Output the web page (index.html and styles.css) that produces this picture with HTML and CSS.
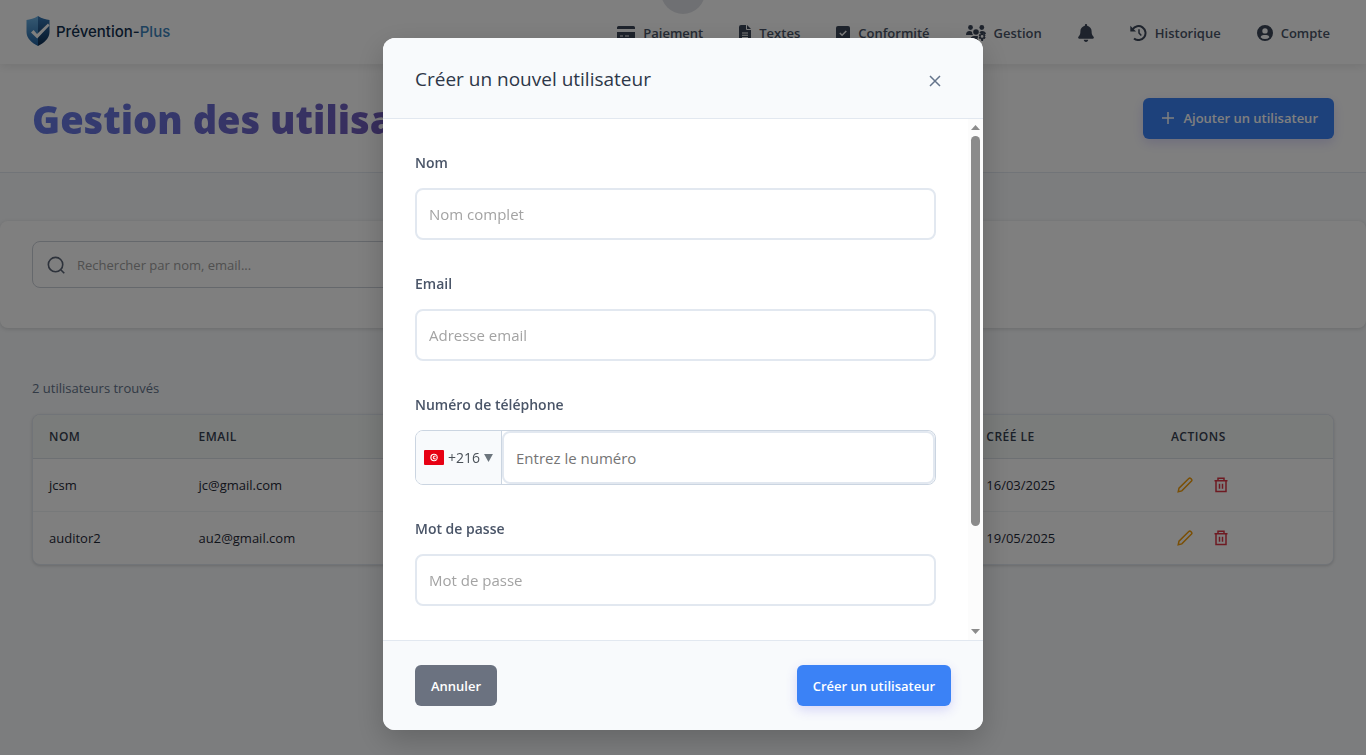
FILE: index.html
```html
<!DOCTYPE html>
<html lang="fr">
<head>
<meta charset="utf-8">
<meta name="viewport" content="width=device-width, initial-scale=1">
<title>Prévention-Plus</title>
<link rel="stylesheet" href="styles.css">
</head>
<body>
<div class="page">
  <header class="topbar">
    <a class="brand" href="#">
      <svg class="brand-mark" viewBox="0 0 24 30" aria-hidden="true">
        <defs>
          <linearGradient id="shieldLeft" x1="0" y1="0" x2="0" y2="1"><stop offset="0" stop-color="#6db4e6"/><stop offset="1" stop-color="#1f5f9e"/></linearGradient>
          <linearGradient id="shieldRight" x1="0" y1="0" x2="0" y2="1"><stop offset="0" stop-color="#3679b8"/><stop offset="1" stop-color="#0d2c50"/></linearGradient>
        </defs>
        <path fill="url(#shieldLeft)" d="M12 0C8 2.600 4 3.600.500 4v12C.500 22.500 6 27 12 30z"/>
        <path fill="url(#shieldRight)" d="M12 0c4 2.600 8 3.600 11.500 4v12C23.500 22.500 18 27 12 30z"/>
        <path fill="#fff" d="M5 16.500 7.600 14l3.400 4L22 7.500l1.500 2L11.200 22.500z"/>
      </svg>
      <span class="brand-name">Prévention-<span class="brand-accent">Plus</span></span>
    </a>
    <span class="top-knob"></span>
    <nav class="nav">
      <a class="nav-link" href="#"><svg class="w18" viewBox="0 0 18 16" aria-hidden="true"><path d="M1.500 1h15A1.500 1.500 0 0 1 18 2.500V4H0V2.500A1.500 1.500 0 0 1 1.500 1zM0 7h18v6.500a1.500 1.500 0 0 1-1.500 1.500h-15A1.500 1.500 0 0 1 0 13.500zm3 3.500v1h3v-1zm5 0v1h4v-1z" fill-rule="evenodd"/></svg>Paiement</a>
      <a class="nav-link" href="#"><svg class="w12" viewBox="0 0 12 16" aria-hidden="true"><path fill-rule="evenodd" d="M2 0h5v4a1 1 0 0 0 1 1h4v9a2 2 0 0 1-2 2H2a2 2 0 0 1-2-2V2a2 2 0 0 1 2-2zm6 0 4 4H8zM3 7.500v1h6v-1zm0 2.200v1h6v-1zM3 12v1h6v-1z"/></svg>Textes</a>
      <a class="nav-link" href="#"><svg class="w14" viewBox="0 0 14 16" aria-hidden="true"><path d="M2 1h10a2 2 0 0 1 2 2v10a2 2 0 0 1-2 2H2a2 2 0 0 1-2-2V3a2 2 0 0 1 2-2z"/><path class="tick" d="m3.800 8 2.300 2.300L10.300 6"/></svg>Conformité</a>
      <a class="nav-link" href="#"><svg class="w20" viewBox="0 0 20 16" aria-hidden="true"><circle cx="4.500" cy="2.500" r="2.400"/><circle cx="15.800" cy="2.500" r="2.400"/><circle cx="10" cy="7" r="2.800"/><path d="M0 10c0-2.700 1.300-4 3.500-4 1 0 2 .300 2.600.900C6 8.300 6.500 9.200 7.200 10zM13.500 8c.100-1 .600-2 2.500-2 2.300 0 3.800 1 4 3l-2 .300-1.500-1-1.300.600zM4 16c0-3.300 1.500-5 4.500-5h3.200l.300 1-.600 1.500L12.500 16z"/><path fill-rule="evenodd" d="m15.300 8 1.700 0 .400 1.300 1.300-.400.900 1.500-.900 1 .900 1.200-.900 1.500-1.300-.400L17 16h-1.700l-.400-2.300-1.300.400-.900-1.500.900-1.200-.9-1 .9-1.500 1.300.400zM16.100 10a1.400 1.400 0 1 0 0 2.800 1.400 1.400 0 0 0 0-2.800z"/></svg>Gestion</a>
      <a class="nav-link" href="#" aria-label="Notifications"><svg class="bell" viewBox="0 0 448 512" aria-hidden="true"><path d="M224 0c-17.700 0-32 14.300-32 32V51.200C119 66 64 130.600 64 208v18.800c0 47-17.300 92.400-48.500 127.600l-7.400 8.300c-8.400 9.400-10.400 22.900-5.300 34.400S19.400 416 32 416H416c12.600 0 24-7.400 29.200-18.900s3.100-25-5.300-34.400l-7.400-8.300C401.300 319.200 384 273.900 384 226.800V208c0-77.400-55-142-128-156.800V32c0-17.700-14.300-32-32-32zm45.300 493.300c12-12 18.700-28.300 18.700-45.300H160c0 17 6.700 33.300 18.700 45.300s28.300 18.700 45.300 18.700 33.300-6.700 45.300-18.700z"/></svg></a>
      <a class="nav-link" href="#"><svg class="w17" viewBox="0 0 17 16" aria-hidden="true"><path class="line" d="M2.600 4.300A7 7 0 1 1 4 13.400"/><path d="M.300.800v5.700h5.700z"/><path class="line thin" d="M9 4.300V8l2.300 2.500"/></svg>Historique</a>
      <a class="nav-link" href="#"><svg class="w16" viewBox="0 0 16 16" aria-hidden="true"><path fill-rule="evenodd" d="M8 0a8 8 0 1 1 0 16A8 8 0 0 1 8 0zm0 3.200a2.700 2.700 0 1 0 0 5.400 2.700 2.700 0 0 0 0-5.400zM3.600 12.200a6 6 0 0 0 8.800 0C11.900 10.700 10.800 10 9.300 10H6.700c-1.500 0-2.600.700-3.100 2.200z"/></svg>Compte</a>
    </nav>
  </header>

  <section class="heading">
    <h1 class="title">Gestion des utilisateurs</h1>
    <button class="btn btn-primary" type="button"><svg class="plus" viewBox="0 0 14 14" aria-hidden="true"><path d="M7 1v12M1 7h12"/></svg>Ajouter un utilisateur</button>
  </section>

  <section class="filters">
    <label class="search">
      <svg class="glass" viewBox="0 0 20 20" aria-hidden="true"><circle cx="9.500" cy="9.500" r="8"/><path d="m15.500 15.500 3.700 3.700"/></svg>
      <input class="search-input" type="text" placeholder="Rechercher par nom, email..." aria-label="Rechercher">
    </label>
  </section>

  <main class="results">
    <p class="count">2 utilisateurs trouvés</p>
    <div class="table-card">
      <table class="users">
        <colgroup><col class="c-name"><col class="c-mail"><col class="c-date"><col></colgroup>
        <thead><tr><th>Nom</th><th>Email</th><th>Créé le</th><th>Actions</th></tr></thead>
        <tbody>
          <tr><td>jcsm</td><td>jc@gmail.com</td><td>16/03/2025</td><td><div class="actions">
            <button class="icon-btn edit" type="button" aria-label="Modifier"><svg viewBox="0 0 16 16" aria-hidden="true"><path d="M1.200 14.800 2 11.200 11.800 1.500c1.300-1.200 3.900 1.200 2.700 2.600L4.800 13.900z"/></svg></button>
            <button class="icon-btn trash" type="button" aria-label="Supprimer"><svg viewBox="0 0 16 16" aria-hidden="true"><path d="M1.500 3.800h13M5 3.800V1.200h6v2.600M3 3.800v10.700h10V3.800M6.500 6.800v5M9.500 6.800v5"/></svg></button>
          </div></td></tr>
          <tr><td>auditor2</td><td>au2@gmail.com</td><td>19/05/2025</td><td><div class="actions">
            <button class="icon-btn edit" type="button" aria-label="Modifier"><svg viewBox="0 0 16 16" aria-hidden="true"><path d="M1.200 14.800 2 11.200 11.800 1.500c1.300-1.200 3.900 1.200 2.700 2.600L4.800 13.900z"/></svg></button>
            <button class="icon-btn trash" type="button" aria-label="Supprimer"><svg viewBox="0 0 16 16" aria-hidden="true"><path d="M1.500 3.800h13M5 3.800V1.200h6v2.600M3 3.800v10.700h10V3.800M6.500 6.800v5M9.500 6.800v5"/></svg></button>
          </div></td></tr>
        </tbody>
      </table>
    </div>
  </main>
</div>

<div class="overlay">
  <form class="modal" role="dialog" aria-labelledby="modal-title">
    <header class="modal-head">
      <h2 class="modal-title" id="modal-title">Créer un nouvel utilisateur</h2>
      <button class="close" type="button" aria-label="Fermer"><svg viewBox="0 0 12 12" aria-hidden="true"><path d="m1 1 10 10M11 1 1 11"/></svg></button>
    </header>
    <div class="modal-body">
      <div class="fields">
        <div class="field"><label class="label" for="name">Nom</label><input class="input" id="name" type="text" placeholder="Nom complet"></div>
        <div class="field"><label class="label" for="email">Email</label><input class="input" id="email" type="email" placeholder="Adresse email"></div>
        <div class="field"><label class="label" for="phone">Numéro de téléphone</label>
          <div class="phone">
            <button class="dial" type="button">
              <svg class="flag" viewBox="0 0 20 15" aria-hidden="true"><rect width="20" height="15" rx="1" fill="#e70013"/><circle cx="10" cy="7.500" r="3.700" fill="#fff"/><circle cx="10.200" cy="7.500" r="2.700" fill="#e70013"/><circle cx="10.900" cy="7.500" r="2.100" fill="#fff"/><path fill="#e70013" d="m9.200 7.500 1.500-.500.100-1.500.900 1.200 1.400-.400-.800 1.200.800 1.200-1.400-.400-.900 1.200-.100-1.500z"/></svg>
              <span>+216</span>
              <svg class="caret" viewBox="0 0 10 9" aria-hidden="true"><path d="M0 0h10L5 9z"/></svg>
            </button>
            <input class="input phone-input" id="phone" type="tel" placeholder="Entrez le numéro">
          </div>
        </div>
        <div class="field"><label class="label" for="password">Mot de passe</label><input class="input" id="password" type="password" placeholder="Mot de passe"></div>
      </div>
      <div class="rail" aria-hidden="true">
        <svg viewBox="0 0 9 5"><path d="M4.500 0 9 5H0z"/></svg>
        <span class="track"><span class="thumb"></span></span>
        <svg viewBox="0 0 9 5"><path d="M0 0h9L4.500 5z"/></svg>
      </div>
    </div>
    <footer class="modal-foot">
      <button class="btn btn-muted" type="button">Annuler</button>
      <button class="btn btn-primary" type="submit">Créer un utilisateur</button>
    </footer>
  </form>
</div>
</body>
</html>
```
FILE: styles.css
```css
* { box-sizing: border-box; }
body {
  margin: 0;
  height: 100vh;
  overflow: hidden;
  background: #f8fafc;
  color: #1f2937;
  font-family: "Open Sans", "Noto Sans", sans-serif;
  font-size: 14px;
}
button, input { font-family: inherit; }
button { cursor: pointer; }
a { color: inherit; text-decoration: none; }

.topbar {
  position: relative;
  z-index: 1;
  display: flex;
  align-items: center;
  justify-content: space-between;
  height: 64px;
  padding: 0 36px 0 26px;
  background: #fff;
  box-shadow: 0 2px 10px rgba(0, 0, 0, .1);
}
.brand { display: flex; align-items: center; gap: 6px; padding-bottom: 2px; }
.brand-mark { width: 24px; height: 30px; }
.brand-name { font-family: Inter, sans-serif; font-size: 15px; font-weight: 500; color: #12304f; }
.brand-accent { color: #3c84bd; }
.top-knob {
  position: absolute;
  top: -30px;
  left: 50%;
  width: 44px;
  height: 44px;
  margin-left: -22px;
  border-radius: 50%;
  background: #dfe1e6;
}
.nav { display: flex; align-items: center; gap: 36px; padding-top: 1px; }
.nav-link { display: flex; align-items: center; gap: 8px; line-height: 24px; font-size: 13px; font-weight: 600; color: #4a5568; }
.nav-link svg { height: 16px; fill: #3c4759; }
.w12 { width: 12px; }
.w14 { width: 14px; }
.w16 { width: 16px; }
.w17 { width: 17px; }
.w18 { width: 18px; }
.w20 { width: 20px; }
.nav-link .bell { width: 16px; height: 18px; }
.tick { fill: none; stroke: #fff; stroke-width: 1.500; }
.line { fill: none; stroke: #3c4759; stroke-width: 2; }
.thin { stroke-width: 1.500; }

.heading {
  display: flex;
  align-items: center;
  justify-content: space-between;
  height: 109px;
  padding: 0 32px;
  border-bottom: 1px solid #e2e8f0;
  background: #fff;
}
.title {
  margin: 0;
  padding-top: 2px;
  font-size: 38px;
  font-weight: 800;
  line-height: 48px;
  color: transparent;
  background: linear-gradient(135deg, #667eea, #764ba2 110%);
  background-clip: text;
  -webkit-background-clip: text;
}
.btn {
  display: flex;
  align-items: center;
  height: 41px;
  padding: 0 16px;
  border: 0;
  border-radius: 6px;
  color: #fff;
  font-size: 13px;
  font-weight: 600;
}
.btn-primary { background: #3b82f6; box-shadow: 0 4px 12px rgba(79, 70, 229, .2); }
.btn-muted { background: #6b7280; }
.plus { width: 14px; height: 14px; margin: 0 8px 0 2px; fill: none; stroke: #fff; stroke-width: 1.500; }

.filters {
  height: 107px;
  margin-top: 48px;
  padding: 20px 32px;
  border-radius: 8px;
  background: #fff;
  box-shadow: 0 1px 4px rgba(0, 0, 0, .15);
}
.search {
  display: flex;
  align-items: center;
  gap: 12px;
  max-width: 600px;
  height: 47px;
  padding: 0 14px;
  border: 1px solid #cbd0d8;
  border-radius: 8px;
}
.glass { width: 18px; height: 18px; fill: none; stroke: #5b6577; stroke-width: 1.800; }
.search-input { flex: 1; min-width: 0; padding: 0; border: 0; outline: 0; background: none; font-size: 13px; }
.search-input::placeholder { color: #a0a0a0; }

.results { padding: 48px 32px 0; }
.count { margin: 0 0 14px; line-height: 24px; font-size: 13px; color: #64748b; }
.table-card {
  overflow: hidden;
  border: 1px solid #e2e8f0;
  border-radius: 8px;
  background: #fff;
  box-shadow: 0 1px 3px rgba(0, 0, 0, .15);
}
.users { width: 100%; border-collapse: collapse; table-layout: fixed; }
.c-name { width: 11.500%; }
.c-mail { width: 60.600%; }
.c-date { width: 14.200%; }
.users th {
  height: 43px;
  padding: 0 16px;
  border-bottom: 1px solid #dbe1e7;
  background: #f5f8f6;
  text-align: left;
  text-transform: uppercase;
  letter-spacing: .5px;
  font-size: 12px;
  font-weight: 600;
  color: #374151;
}
.users td { height: 53px; padding: 0 16px; font-size: 13px; }
.users tbody tr + tr td { border-top: 1px solid #eff2f5; }
.actions { display: flex; gap: 8px; }
.icon-btn { display: flex; padding: 6px; border: 0; background: none; }
.icon-btn svg { width: 16px; height: 16px; fill: none; stroke-width: 1.500; }
.edit svg { stroke: #f59e0b; }
.trash svg { stroke: #dc3545; }

.overlay {
  position: fixed;
  inset: 0;
  z-index: 10;
  display: flex;
  align-items: flex-start;
  justify-content: center;
  padding: 38px 16px 25px;
  background: rgba(0, 0, 0, .5);
}
.modal {
  display: flex;
  flex-direction: column;
  width: 100%;
  max-width: 600px;
  max-height: 100%;
  overflow: hidden;
  border-radius: 12px;
  background: #fff;
  box-shadow: 0 10px 30px rgba(0, 0, 0, .2);
}
.modal-head {
  display: flex;
  align-items: flex-end;
  justify-content: space-between;
  padding: 25px 32px 21px;
  border-bottom: 1px solid #e2e8f0;
  background: #f8fafc;
}
.modal-title { margin: 0; padding-bottom: 2px; line-height: 32px; font-size: 19px; font-weight: 500; color: #2d3748; }
.close { display: flex; padding: 10px; border: 0; background: none; }
.close svg { width: 12px; height: 12px; fill: none; stroke: #64748b; stroke-width: 1.500; }
.modal-body { display: flex; flex: 1; min-height: 0; }
.fields { flex: 1; overflow-y: auto; padding: 32px; scrollbar-width: none; }
.field { margin-bottom: 32px; }
.label { display: block; margin-bottom: 13px; line-height: 24px; font-size: 14px; font-weight: 600; color: #4a5568; }
.input {
  display: block;
  width: 100%;
  height: 52px;
  padding: 0 12px;
  border: 2px solid #e2e8f0;
  border-radius: 8px;
  background: #fff;
  font-size: 15px;
}
.input::placeholder { color: #a3a3a3; }
.phone { display: flex; height: 55px; overflow: hidden; border: 1px solid #cbd5e1; border-radius: 8px; }
.dial {
  display: flex;
  align-items: center;
  gap: 4px;
  padding: 0 8px;
  border: 0;
  border-right: 1px solid #cbd5e1;
  background: #f8fafc;
  font-size: 14px;
  color: #495057;
}
.flag { width: 20px; height: 15px; }
.caret { width: 9px; height: 8px; fill: #6c757d; }
.phone-input { flex: 1; min-width: 0; height: auto; }
.phone-input::placeholder { color: #757575; }
.rail { display: flex; flex-direction: column; align-items: center; gap: 6px; width: 15px; padding: 6px 0; background: #fcfcfc; }
.rail svg { width: 9px; height: 5px; fill: #8b8b8b; }
.track { flex: 1; }
.thumb { display: block; width: 9px; height: 80%; border-radius: 5px; background: #8b8b8b; }
.modal-foot {
  display: flex;
  align-items: center;
  justify-content: space-between;
  padding: 24px 32px;
  border-top: 1px solid #e2e8f0;
  background: #f8fafc;
}
```
